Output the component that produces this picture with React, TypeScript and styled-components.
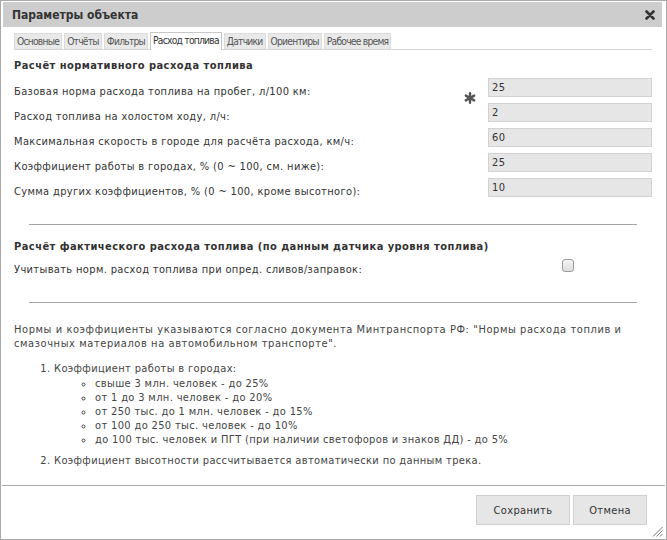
import React, { useState } from 'react';
import styled, { createGlobalStyle } from 'styled-components';

const GlobalStyle = createGlobalStyle`
  html, body {
    margin: 0;
    padding: 0;
    background: #fff;
  }
  body {
    font-family: "DejaVu Sans Condensed", "DejaVu Sans", sans-serif;
    font-size: 11px;
    letter-spacing: 0.35px;
    color: #333;
  }
`;

const tabs = ['Основные', 'Отчёты', 'Фильтры', 'Расход топлива', 'Датчики', 'Ориентиры', 'Рабочее время'];

const fields = [
    { label: 'Базовая норма расхода топлива на пробег, л/100 км:', value: '25', required: true },
    { label: 'Расход топлива на холостом ходу, л/ч:', value: '2' },
    { label: 'Максимальная скорость в городе для расчёта расхода, км/ч:', value: '60' },
    { label: 'Коэффициент работы в городах, % (0 ~ 100, см. ниже):', value: '25' },
    { label: 'Сумма других коэффициентов, % (0 ~ 100, кроме высотного):', value: '10' },
];

const cityRates = [
    'свыше 3 млн. человек - до 25%',
    'от 1 до 3 млн. человек - до 20%',
    'от 250 тыс. до 1 млн. человек - до 15%',
    'от 100 до 250 тыс. человек - до 10%',
    'до 100 тыс. человек и ПГТ (при наличии светофоров и знаков ДД) - до 5%',
];

const CloseIcon = () => (
    <svg width="10" height="10" viewBox="0 0 10 10">
        <path d="M1.5 1.5 L8.5 8.5 M8.5 1.5 L1.5 8.5" stroke="#333" strokeWidth="2.6" strokeLinecap="round" />
    </svg>
);

const RequiredIcon = () => (
    <svg width="12" height="12" viewBox="0 0 12 12">
        <g stroke="#555" strokeWidth="2.4" strokeLinecap="round">
            <path d="M6 1.2 V10.8" />
            <path d="M1.8 3.6 L10.2 8.4" />
            <path d="M10.2 3.6 L1.8 8.4" />
        </g>
    </svg>
);

const Grip = () => (
    <svg width="11" height="11" viewBox="0 0 11 11">
        <g stroke="#777" strokeWidth="1">
            <path d="M10.5 1 L1 10.5" />
            <path d="M10.5 4.5 L4.5 10.5" />
            <path d="M10.5 8 L8 10.5" />
        </g>
    </svg>
);

export default function App() {
    const [active, setActive] = useState(3);
    const [useNorm, setUseNorm] = useState(false);
    return (
        <>
            <GlobalStyle />
            <Dialog>
                <TitleBar>
                    <Title>Параметры объекта</Title>
                    <CloseButton><CloseIcon /></CloseButton>
                </TitleBar>
                <Content>
                    <TabRow>
                        {tabs.map((t, i) => (
                            <Tab key={t} $active={i === active} onClick={() => setActive(i)}>{t}</Tab>
                        ))}
                    </TabRow>

                    <SectionTitle $top={9}>Расчёт нормативного расхода топлива</SectionTitle>
                    <Form>
                        {fields.map((f) => (
                            <Row key={f.label}>
                                <Label $offset={9}>{f.label}</Label>
                                <Cell>
                                    {f.required && <Marker><RequiredIcon /></Marker>}
                                    <Input defaultValue={f.value} />
                                </Cell>
                            </Row>
                        ))}
                    </Form>

                    <Separator $top={24} />

                    <SectionTitle $top={15}>Расчёт фактического расхода топлива (по данным датчика уровня топлива)</SectionTitle>
                    <Row>
                        <Label $offset={7}>Учитывать норм. расход топлива при опред. сливов/заправок:</Label>
                        <Cell $center>
                            <Check $checked={useNorm} onClick={() => setUseNorm(!useNorm)} />
                        </Cell>
                    </Row>

                    <Separator $top={23} />

                    <Note>
                        Нормы и коэффициенты указываются согласно документа Минтранспорта РФ: "Нормы расхода топлив и<br />
                        смазочных материалов на автомобильном транспорте".
                    </Note>
                    <Steps>
                        <li>
                            Коэффициент работы в городах:
                            <Rates>
                                {cityRates.map((r) => <li key={r}>{r}</li>)}
                            </Rates>
                        </li>
                        <li>Коэффициент высотности рассчитывается автоматически по данным трека.</li>
                    </Steps>
                </Content>
                <Footer>
                    <Button $width={94}>Сохранить</Button>
                    <Button $width={74}>Отмена</Button>
                </Footer>
                <ResizeGrip><Grip /></ResizeGrip>
            </Dialog>
        </>
    );
}

const Dialog = styled.div`
position: relative;
width: 667px;
height: 540px;
box-sizing: border-box;
border: 1px solid #a9a9a9;
display: flex;
flex-direction: column;
background: #fff;
overflow: hidden;
`

const TitleBar = styled.div`
height: 25px;
margin: 1px 4px 0 2px;
padding: 0 7px 0 9px;
background: #cdcdcd;
display: flex;
align-items: center;
justify-content: space-between;
`

const Title = styled.div`
font-size: 12px;
font-weight: bold;
letter-spacing: 0;
color: #333;
`

const CloseButton = styled.span`
display: flex;
cursor: pointer;
`

const Content = styled.div`
flex: 1;
padding: 5px 14px 0 13px;
`

const TabRow = styled.div`
display: flex;
align-items: flex-end;
gap: 2px;
height: 17px;
border-bottom: 1px solid #d4d4d4;
`

const Tab = styled.div<{ $active?: boolean }>`
height: ${p => p.$active ? 17 : 15}px;
line-height: ${p => p.$active ? 16 : 15}px;
padding: 0 2px;
font-size: 10.2px;
letter-spacing: -0.75px;
border: 1px solid ${p => p.$active ? '#c8c8c8' : '#dcdcdc'};
border-bottom: none;
margin-bottom: ${p => p.$active ? -1 : 0}px;
background: ${p => p.$active ? '#fff' : '#e9e9e9'};
color: ${p => p.$active ? '#333' : '#555'};
cursor: default;
white-space: nowrap;
`

const SectionTitle = styled.div<{ $top: number }>`
margin-top: ${p => p.$top}px;
line-height: 14px;
font-weight: bold;
letter-spacing: 0.45px;
color: #333;
`

const Form = styled.div`
margin-top: 2px;
`

const Row = styled.div`
display: flex;
align-items: center;
height: 25px;
`

const Label = styled.div<{ $offset: number }>`
flex: 1;
padding-top: ${p => p.$offset}px;
line-height: 14px;
color: #333;
`

const Cell = styled.div<{ $center?: boolean }>`
position: relative;
width: 164px;
display: flex;
justify-content: ${p => p.$center ? 'center' : 'flex-start'};
`

const Marker = styled.span`
position: absolute;
left: -24px;
top: 14px;
display: flex;
`

const Input = styled.input`
width: 164px;
height: 19px;
box-sizing: border-box;
border: 1px solid #d2d2d2;
background: #e6e6e6;
padding: 0 3px;
margin: 0;
font-family: inherit;
font-size: 11px;
letter-spacing: 0.35px;
color: #333;
outline: none;
`

const Check = styled.span<{ $checked?: boolean }>`
width: 12px;
height: 13px;
box-sizing: border-box;
margin-top: -3px;
margin-left: -4px;
border: 1px solid #9a9a9a;
border-radius: 3px;
background: ${p => p.$checked ? '#8ab' : 'linear-gradient(#f4f4f4, #dedede)'};
cursor: pointer;
`

const Separator = styled.div<{ $top: number }>`
margin: ${p => p.$top}px 15px 0 15px;
height: 1px;
background: #a4a4a4;
`

const Note = styled.p`
margin: 20px 0 0;
line-height: 14px;
letter-spacing: 0.58px;
color: #444;
`

const Steps = styled.ol`
margin: 11px 0 0;
padding-left: 40px;
line-height: 14px;
color: #444;
li + li {
    margin-top: 7px;
}
`

const Rates = styled.ul`
margin: 1px 0 0;
padding-left: 41px;
list-style: circle;
li + li {
    margin-top: 0;
}
`

const Footer = styled.div`
height: 44px;
margin: 0 1px;
border-top: 1px solid #a9a9a9;
padding: 9px 18px 0 0;
display: flex;
justify-content: flex-end;
align-items: flex-start;
gap: 3px;
`

const Button = styled.button<{ $width: number }>`
width: ${p => p.$width}px;
height: 30px;
padding: 0;
border: 1px solid #d0d0d0;
background: #e6e6e6;
font-family: inherit;
font-size: 11px;
letter-spacing: 0.35px;
color: #333;
cursor: pointer;
`

const ResizeGrip = styled.span`
position: absolute;
right: 3px;
bottom: 2px;
display: flex;
`
